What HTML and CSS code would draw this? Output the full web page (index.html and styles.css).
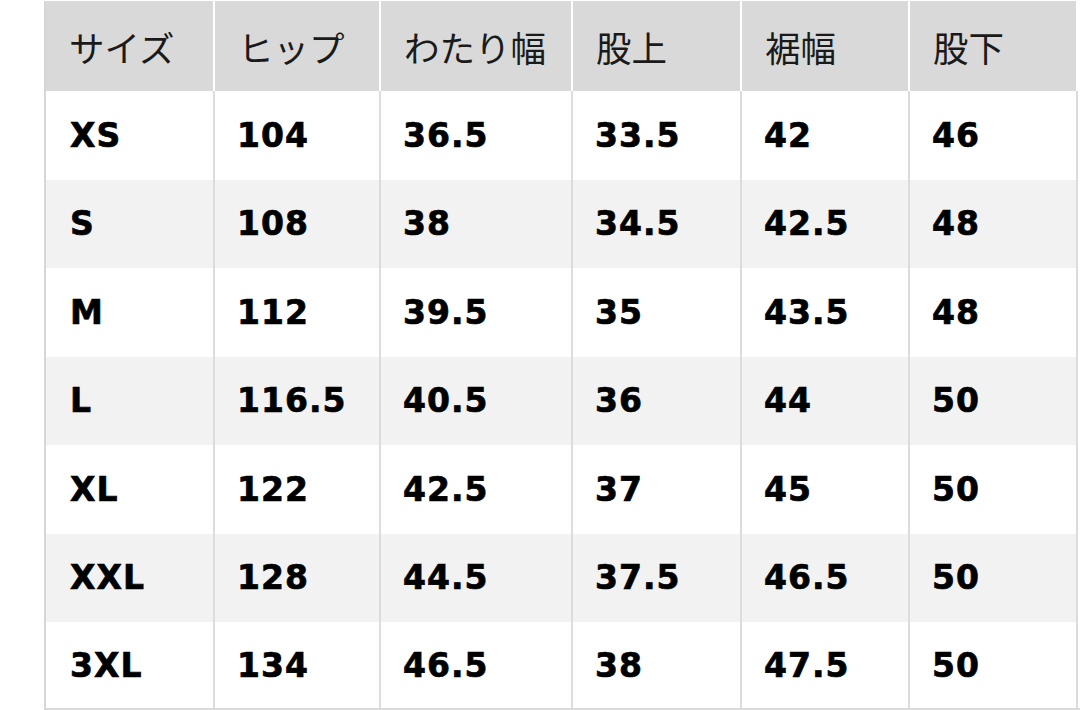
FILE: index.html
```html
<!DOCTYPE html>
<html lang="ja">
<head>
<meta charset="utf-8">
<link rel="stylesheet" href="styles.css">
</head>
<body>
<div class="wrap">
  <div class="table">
    <div class="th">サイズ</div><div class="th">ヒップ</div><div class="th">わたり幅</div><div class="th">股上</div><div class="th">裾幅</div><div class="th">股下</div>

    <div class="td first">XS</div><div class="td">104</div><div class="td">36.5</div><div class="td">33.5</div><div class="td">42</div><div class="td">46</div>

    <div class="td first alt">S</div><div class="td alt">108</div><div class="td alt">38</div><div class="td alt">34.5</div><div class="td alt">42.5</div><div class="td alt">48</div>

    <div class="td first">M</div><div class="td">112</div><div class="td">39.5</div><div class="td">35</div><div class="td">43.5</div><div class="td">48</div>

    <div class="td first alt">L</div><div class="td alt">116.5</div><div class="td alt">40.5</div><div class="td alt">36</div><div class="td alt">44</div><div class="td alt">50</div>

    <div class="td first">XL</div><div class="td">122</div><div class="td">42.5</div><div class="td">37</div><div class="td">45</div><div class="td">50</div>

    <div class="td first alt">XXL</div><div class="td alt">128</div><div class="td alt">44.5</div><div class="td alt">37.5</div><div class="td alt">46.5</div><div class="td alt">50</div>

    <div class="td first">3XL</div><div class="td">134</div><div class="td">46.5</div><div class="td">38</div><div class="td">47.5</div><div class="td">50</div>
  </div>
</div>
</body>
</html>
```

FILE: styles.css
```css
html, body {
  margin: 0;
  padding: 0;
  background: #ffffff;
}

.wrap {
  padding: 1px 0 0 44px;
  width: 1080px;
  height: 710px;
  box-sizing: border-box;
  overflow: hidden;
}

.table {
  display: grid;
  grid-template-columns: 169px 166px 192px 169px 168px 168px;
  grid-template-rows: 90px repeat(6, 88.5px) 86px;
  width: 1034px;
  border-left: 2px solid #d6d6d6;
  border-bottom: 2px solid #dadada;
}

.th,
.td {
  display: flex;
  align-items: center;
  padding-left: 22px;
  box-sizing: border-box;
  white-space: nowrap;
}

.th {
  background: #d9d9d9;
  border-right: 2px solid #ffffff;
  color: #1a1a1a;
  font-family: "Noto Sans CJK JP", "Noto Sans", sans-serif;
  font-size: 35.5px;
  font-weight: 400;
  padding-left: 23px;
}

.td {
  background: #ffffff;
  border-right: 2px solid #dcdcdc;
  color: #000000;
  font-family: "DejaVu Sans", sans-serif;
  font-weight: 700;
  font-size: 33px;
  letter-spacing: 1px;
  -webkit-text-stroke: 0.7px #000000;
}

.td.alt {
  background: #f2f2f2;
}

.td.first {
  padding-left: 24px;
}
```
